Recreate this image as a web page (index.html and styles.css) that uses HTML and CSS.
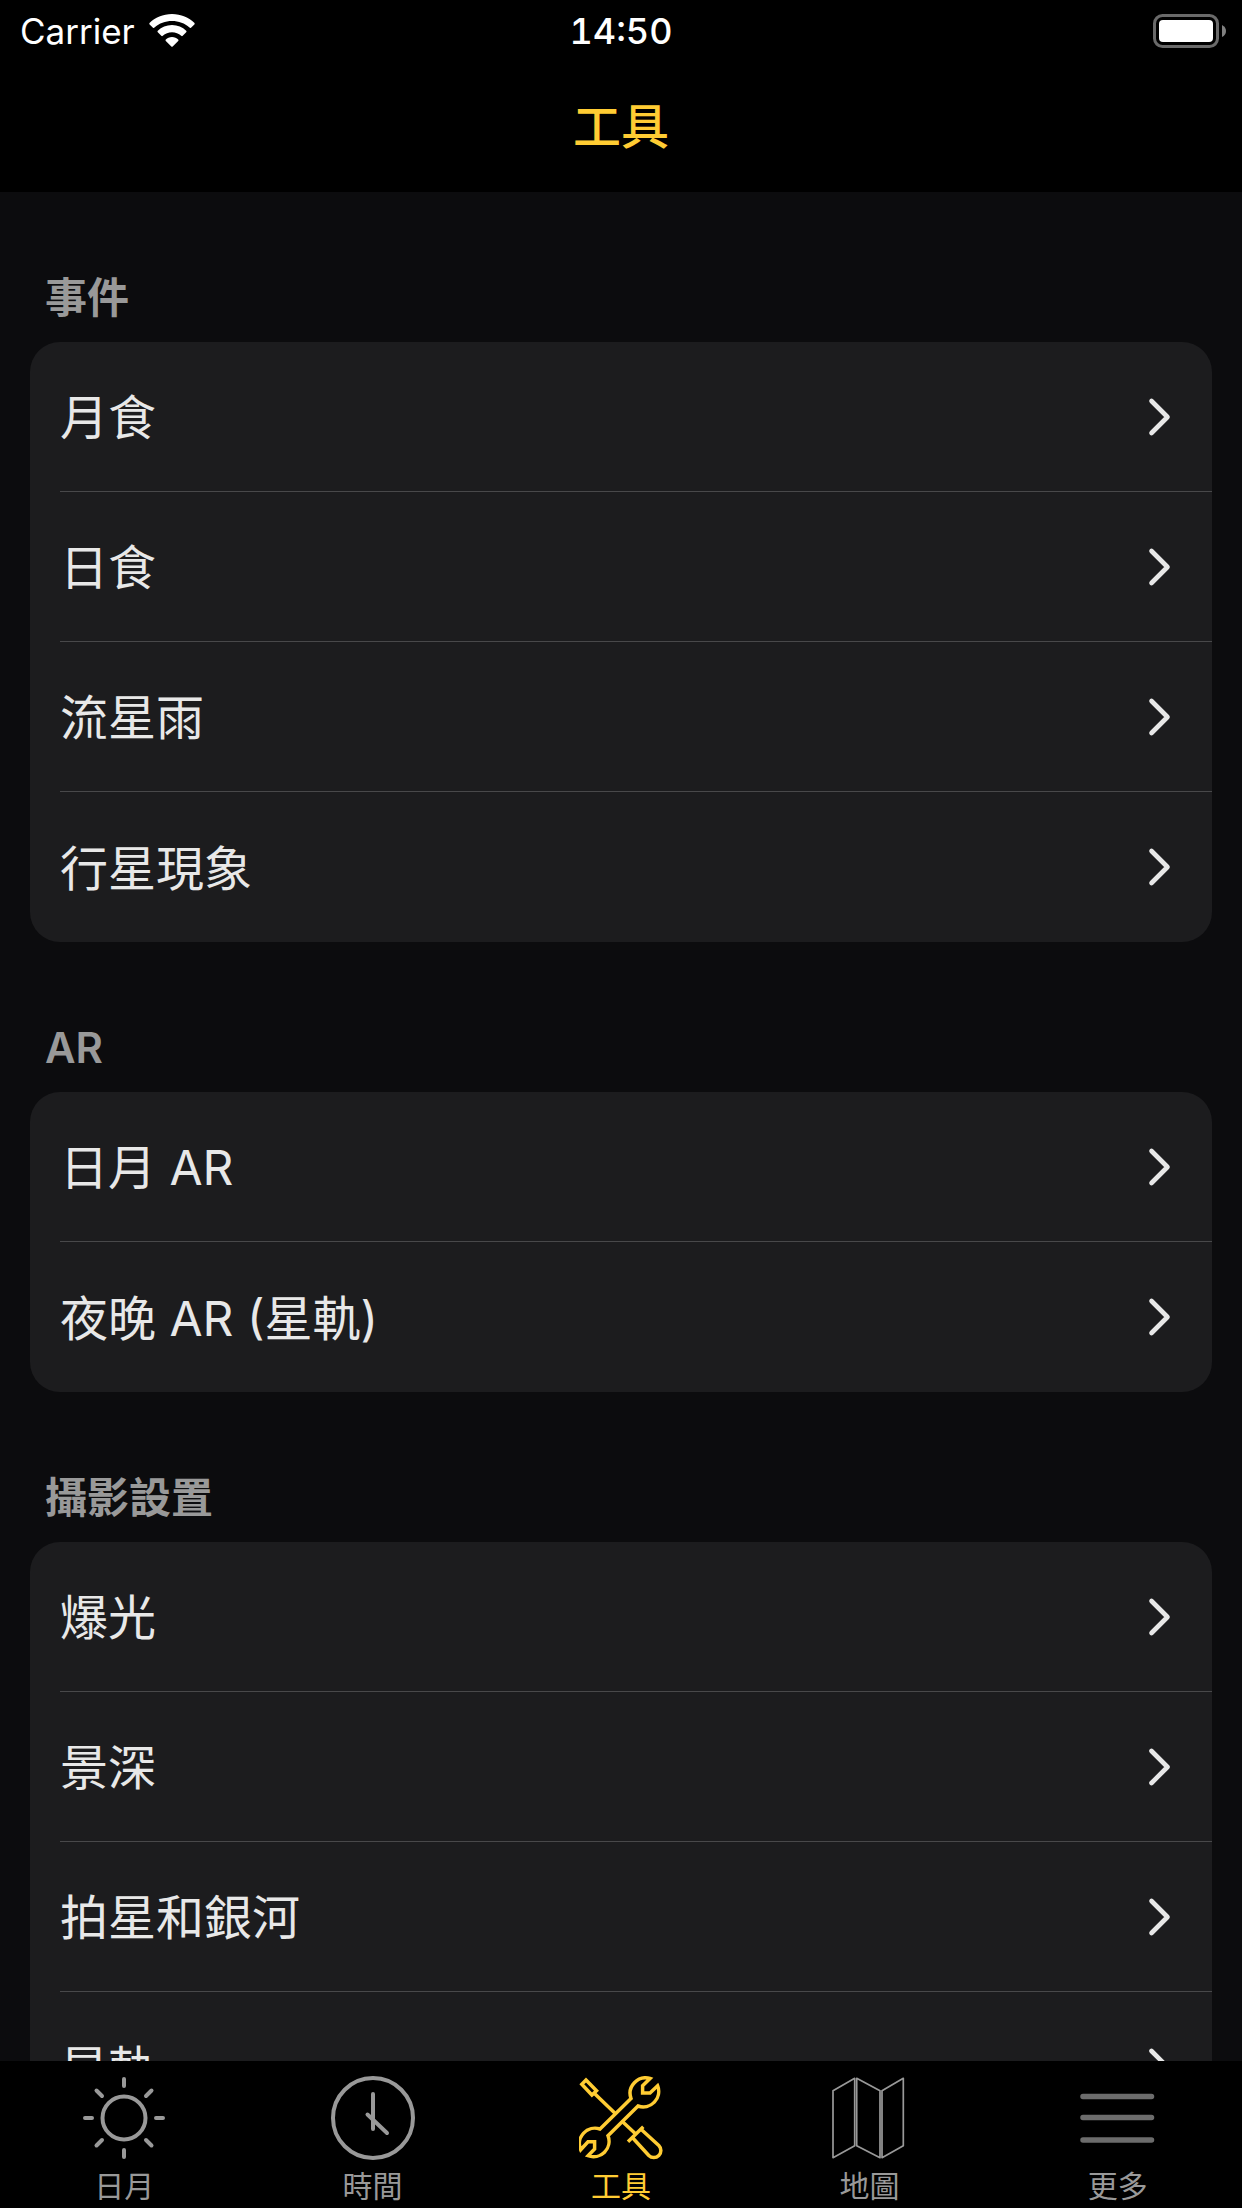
FILE: index.html
```html
<!DOCTYPE html>
<html lang="zh-Hant">
<head>
<meta charset="UTF-8">
<meta name="viewport" content="width=device-width, initial-scale=1.0">
<title>工具</title>
<link rel="stylesheet" href="styles.css">
</head>
<body>
<svg class="symbols" aria-hidden="true">
    <symbol id="chevron" viewBox="0 0 24 40">
        <path d="M3.500 4 L19.500 20 L3.500 36" fill="none" stroke="currentColor" stroke-width="4.600" stroke-linecap="round" stroke-linejoin="round"/>
    </symbol>
</svg>

<header class="header">
    <div class="status-bar">
        <div class="carrier">
            <span>Carrier</span>
            <svg width="46" height="34" viewBox="0 0 46 34" fill="currentColor">
                <path d="M23 0 C32 0 40 3.500 45.500 9 Q46 9.800 45.400 10.500 L42 13.700 Q41.300 14.300 40.500 13.600 C35.800 9.300 29.700 7 23 7 C16.300 7 10.200 9.300 5.500 13.600 Q4.700 14.300 4 13.700 L0.600 10.500 Q0 9.800 0.500 9 C6 3.500 14 0 23 0 Z"/>
                <path d="M23 11 C28.600 11 33.500 13.200 37.200 16.700 Q38 17.500 37.200 18.300 L33.700 21.800 Q33 22.500 32.200 21.800 C29.700 19.600 26.500 18.300 23 18.300 C19.500 18.300 16.300 19.600 13.800 21.800 Q13 22.500 12.300 21.800 L8.800 18.300 Q8 17.500 8.800 16.700 C12.500 13.200 17.400 11 23 11 Z"/>
                <path d="M23 23 C25.500 23 27.700 24 29.200 25.400 Q29.900 26.100 29.200 26.900 L23.700 32.500 Q23 33.100 22.300 32.500 L16.800 26.900 Q16.100 26.100 16.800 25.400 C18.300 24 20.500 23 23 23 Z"/>
            </svg>
        </div>
        <time class="clock">14:50</time>
        <svg class="battery" width="74" height="34" viewBox="0 0 74 34">
            <rect x="1.500" y="1.500" width="63" height="31" rx="8" fill="none" stroke="#6a6a6a" stroke-width="3"/>
            <rect x="6" y="6" width="54" height="22" rx="4" fill="#fff"/>
            <path d="M69 11 Q73 13 73 17 Q73 21 69 23 Z" fill="#808080"/>
        </svg>
    </div>
    <h1 class="title">工具</h1>
</header>

<main class="content">
    <section>
        <h2>事件</h2>
        <ul class="card">
            <li><a href="#"><span>月食</span><svg class="chevron"><use href="#chevron"/></svg></a></li>
            <li><a href="#"><span>日食</span><svg class="chevron"><use href="#chevron"/></svg></a></li>
            <li><a href="#"><span>流星雨</span><svg class="chevron"><use href="#chevron"/></svg></a></li>
            <li><a href="#"><span>行星現象</span><svg class="chevron"><use href="#chevron"/></svg></a></li>
        </ul>
    </section>

    <section>
        <h2>AR</h2>
        <ul class="card">
            <li><a href="#"><span>日月 AR</span><svg class="chevron"><use href="#chevron"/></svg></a></li>
            <li><a href="#"><span>夜晚 AR (星軌)</span><svg class="chevron"><use href="#chevron"/></svg></a></li>
        </ul>
    </section>

    <section>
        <h2>攝影設置</h2>
        <ul class="card">
            <li><a href="#"><span>爆光</span><svg class="chevron"><use href="#chevron"/></svg></a></li>
            <li><a href="#"><span>景深</span><svg class="chevron"><use href="#chevron"/></svg></a></li>
            <li><a href="#"><span>拍星和銀河</span><svg class="chevron"><use href="#chevron"/></svg></a></li>
            <li><a href="#"><span>星軌</span><svg class="chevron"><use href="#chevron"/></svg></a></li>
        </ul>
    </section>
</main>

<nav class="tab-bar">
    <a class="tab" href="#">
        <svg viewBox="0 0 84 84" stroke-width="4" stroke-linecap="round">
            <circle cx="42" cy="42" r="21.500"/>
            <path d="M42 3V10M42 74V81M3 42H10M74 42H81M14.500 14.500L20 20M64 64L69.500 69.500M69.500 14.500L64 20M20 64L14.500 69.500"/>
        </svg>
        <span>日月</span>
    </a>
    <a class="tab" href="#">
        <svg viewBox="0 0 84 84" stroke-width="4" stroke-linecap="round">
            <circle cx="42" cy="42" r="40"/>
            <path d="M42 18V53M36.500 38.500L56 57"/>
        </svg>
        <span>時間</span>
    </a>
    <a class="tab active" href="#" aria-current="page">
        <svg viewBox="0 0 84 84" stroke-width="3.500">
            <!-- wrench -->
            <path d="M52 22.500A15.500 15.500 0 0 1 71 2.500L63.600 9.700V17H71L78.600 9.700A15.500 15.500 0 0 1 59 30L29 59.700A15.500 15.500 0 0 1 9 79.700L15.600 73V65.700H9L1.700 73.700A15.500 15.500 0 0 1 21 53Z"/>
            <!-- screwdriver -->
            <path d="M7 4L17.500 14.700L12.900 19L2.800 8.300Z"/>
            <path d="M15.500 17.500L36 37.300M43.600 45.700L57.300 58.500M49 65.700L64.300 50.700"/>
            <path d="M53.800 62L69.800 79.500A7 7 0 0 0 79.800 69.500L62.300 53.500"/>
        </svg>
        <span>工具</span>
    </a>
    <a class="tab" href="#">
        <svg viewBox="0 0 84 84" stroke-width="1.700" stroke-linejoin="round">
            <path d="M6 14.700L27.700 2.300V69.700L6 81.700Z"/>
            <path d="M29.700 2.300L53 14.700V81.700L29.700 69.700Z"/>
            <path d="M55 14.700L76.300 2.300V69.700L55 81.700Z"/>
        </svg>
        <span>地圖</span>
    </a>
    <a class="tab" href="#">
        <svg class="menu-icon" viewBox="0 0 84 84" stroke-width="5.500" stroke-linecap="round">
            <path d="M7 20.500H75.500M7 41.500H75.500M7 64H75.500"/>
        </svg>
        <span>更多</span>
    </a>
</nav>
</body>
</html>
```

FILE: styles.css
```css
:root {
    /* colors */
    --accent: #ffcc33;
    --bar: #000;
    --background: #0c0c0e;
    --card: #1c1c1e;
    --line: #48484a;
    --text: #e8e8e8;
    --muted: #999;
    /* fonts */
    --font: Inter, "Noto Sans CJK TC", sans-serif;
}

* {
    box-sizing: border-box;
}

body {
    display: flex;
    flex-direction: column;
    height: 100vh;
    margin: 0;
    background-color: var(--background);
    color: var(--text);
    font-family: var(--font);
}

a {
    color: inherit;
    text-decoration: none;
}

.symbols {
    display: none;
}

.header {
    background-color: var(--bar);
}

.status-bar {
    display: grid;
    grid-template-columns: 1fr auto 1fr;
    align-items: center;
    height: 62px;
    padding: 0 15px;
    color: #fff;
    font-size: 35px;
    line-height: 62px;
}

.carrier {
    display: flex;
    align-items: center;
    gap: 14px;
    padding-left: 5px;
}

.clock {
    font-size: 36px;
    font-weight: 500;
    font-variant-numeric: tabular-nums;
}

.battery {
    justify-self: end;
}

.title {
    margin: 0;
    color: var(--accent);
    font-size: 48px;
    font-weight: 500;
    line-height: 130px;
    text-align: center;
}

.content {
    flex: 1;
    min-height: 0;
    padding: 0 30px;
    overflow-y: auto;
    scrollbar-width: none;
}

h2 {
    margin: 0;
    padding: 76px 15px 14px;
    color: var(--muted);
    font-size: 42px;
    font-weight: 600;
    line-height: 60px;
}

.card {
    margin: 0;
    padding: 0 0 0 30px;
    border-radius: 30px;
    background-color: var(--card);
    list-style: none;
}

.card li + li {
    border-top: 1px solid var(--line);
}

.card a {
    display: flex;
    align-items: center;
    justify-content: space-between;
    height: 149px;
    padding-right: 40px;
    font-size: 48px;
}

.card li:last-child a {
    height: 150px;
}

.card span {
    padding-bottom: 5px;
}

.chevron {
    width: 24px;
    height: 40px;
}

.tab-bar {
    display: grid;
    grid-template-columns: repeat(5, 1fr);
    height: 147px;
    padding-top: 15px;
    background-color: var(--bar);
}

.tab {
    display: flex;
    flex-direction: column;
    align-items: center;
    gap: 8px;
    color: var(--muted);
    font-size: 30px;
    line-height: 36px;
}

.tab svg {
    width: 84px;
    height: 84px;
    fill: none;
    stroke: currentColor;
}

.tab .menu-icon {
    color: #6c6c6c;
}

.tab.active {
    color: var(--accent);
}
```
